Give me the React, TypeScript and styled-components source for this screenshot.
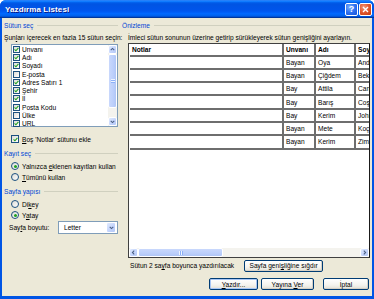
import React from "react";
import styled, { createGlobalStyle } from "styled-components";

const GlobalStyle = createGlobalStyle`
  html, body {
    margin: 0;
    padding: 0;
    background: #ffffff;
  }
  body {
    font-family: "Liberation Sans", Arial, sans-serif;
    font-size: 6.6px;
    color: #000000;
  }
`;

const Window = styled.div`
  width: 374px;
  height: 299px;
  box-sizing: border-box;
  display: flex;
  flex-direction: column;
  background: #0055e5;
  border-radius: 6px 6px 0 0;
  overflow: hidden;
`;

const TitleBar = styled.div`
  height: 18px;
  flex: none;
  display: flex;
  align-items: center;
  justify-content: space-between;
  padding: 0 2px 0 5px;
  background: linear-gradient(
    #0058ee 0%,
    #3593ff 4%,
    #288eff 6%,
    #127dff 8%,
    #036ffc 10%,
    #0262ee 14%,
    #0057e5 20%,
    #0054e3 24%,
    #0055eb 56%,
    #005bf5 66%,
    #026afe 76%,
    #0062ef 86%,
    #0052d6 92%,
    #0040ab 94%,
    #003092 100%
  );
`;

const Title = styled.span`
  color: #ffffff;
  font-weight: bold;
  font-size: 8px;
  text-shadow: 1px 1px #0a1883;
  letter-spacing: 0.1px;
`;

const Caps = styled.div`
  display: flex;
  gap: 1px;
`;

const CapButton = styled.div<{ $kind: "help" | "close" }>`
  width: 11px;
  height: 11px;
  border: 1px solid #ffffff;
  border-radius: 2px;
  display: flex;
  align-items: center;
  justify-content: center;
  color: #ffffff;
  font-weight: bold;
  font-size: 9px;
  background: ${(p) =>
    p.$kind === "close"
      ? "radial-gradient(circle at 35% 30%, #f19a7e 0%, #e35a32 45%, #c2380c 100%)"
      : "radial-gradient(circle at 35% 30%, #7fb2ff 0%, #2f72f0 50%, #1650d8 100%)"};
`;

const Body = styled.div`
  flex: 1;
  min-height: 0;
  margin: 0 2px 3px 2px;
  background: #ece9d8;
  display: flex;
  gap: 4px;
  padding: 0 2px 0 2px;
`;

const LeftCol = styled.div`
  width: 114px;
  flex: none;
  display: flex;
  flex-direction: column;
`;

const RightCol = styled.div`
  flex: 1;
  min-width: 0;
  display: flex;
  flex-direction: column;
`;

const GroupHeader = styled.div<{ $top: number }>`
  margin-top: ${(p) => p.$top}px;
  height: 8px;
  display: flex;
  align-items: center;
  gap: 4px;
  color: #0046d5;
  white-space: nowrap;
  &::after {
    content: "";
    flex: 1;
    height: 1px;
    background: #d0d0bf;
  }
`;

const Hint = styled.div<{ $indent?: number }>`
  margin-top: 4px;
  height: 9px;
  line-height: 9px;
  white-space: nowrap;
  padding-left: ${(p) => p.$indent ?? 0}px;
`;

const ListBox = styled.div`
  margin: 2px 0 0 7px;
  height: 83px;
  box-sizing: border-box;
  border: 1px solid #7f9db9;
  background: #ffffff;
  display: flex;
`;

const ListItems = styled.div`
  flex: 1;
  padding: 0 0 0 1px;
`;

const ListItem = styled.div`
  height: 8.3px;
  display: flex;
  align-items: center;
  gap: 2px;
  white-space: nowrap;
`;

const Box = styled.span<{ $size: number }>`
  width: ${(p) => p.$size}px;
  height: ${(p) => p.$size}px;
  box-sizing: border-box;
  border: 1px solid #1c5180;
  background: linear-gradient(135deg, #dcdcd7 0%, #ffffff 100%);
  display: inline-flex;
  align-items: center;
  justify-content: center;
  flex: none;
`;

const Radio = styled.span<{ $on?: boolean }>`
  width: 8px;
  height: 8px;
  box-sizing: border-box;
  border: 1px solid #1c5180;
  border-radius: 50%;
  background: linear-gradient(135deg, #dcdcd7 0%, #ffffff 100%);
  display: inline-flex;
  align-items: center;
  justify-content: center;
  flex: none;
  &::after {
    content: "";
    width: 3px;
    height: 3px;
    border-radius: 50%;
    background: ${(p) => (p.$on ? "#21a121" : "transparent")};
  }
`;

const VScroll = styled.div`
  width: 9px;
  display: flex;
  flex-direction: column;
  background: #f4f3ee;
`;

const ScrollBtn = styled.div<{ $w: number; $h: number }>`
  width: ${(p) => p.$w}px;
  height: ${(p) => p.$h}px;
  box-sizing: border-box;
  flex: none;
  border: 1px solid #ffffff;
  border-radius: 2px;
  background: linear-gradient(135deg, #e0eafe 0%, #c2d3fc 60%, #b4c8f6 100%);
  display: flex;
  align-items: center;
  justify-content: center;
`;

const Thumb = styled.div<{ $vertical?: boolean; $size: number }>`
  ${(p) => (p.$vertical ? "height" : "width")}: ${(p) => p.$size}px;
  flex: none;
  box-sizing: border-box;
  border: 1px solid #ffffff;
  border-radius: 2px;
  background: ${(p) =>
    p.$vertical
      ? "linear-gradient(90deg, #c9d8fc 0%, #bccffb 60%, #b0c6f6 100%)"
      : "linear-gradient(180deg, #c9d8fc 0%, #bccffb 60%, #b0c6f6 100%)"};
  display: flex;
  align-items: center;
  justify-content: center;
`;

const Grip = styled.span<{ $vertical?: boolean }>`
  width: 4px;
  height: 4px;
  background: ${(p) =>
    p.$vertical
      ? "repeating-linear-gradient(180deg, #eef4fe 0 1px, #8cb0f8 1px 2px)"
      : "repeating-linear-gradient(90deg, #eef4fe 0 1px, #8cb0f8 1px 2px)"};
`;

const Row = styled.div<{ $top: number; $indent?: number }>`
  margin-top: ${(p) => p.$top}px;
  padding-left: ${(p) => p.$indent ?? 7}px;
  height: 10px;
  display: flex;
  align-items: center;
  gap: 3px;
  white-space: nowrap;
`;

const SizeRow = styled.div`
  margin-top: 1px;
  padding-left: 5px;
  height: 13px;
  display: flex;
  align-items: center;
  justify-content: space-between;
  white-space: nowrap;
`;

const SelectBox = styled.div`
  width: 60px;
  height: 13px;
  box-sizing: border-box;
  border: 1px solid #7f9db9;
  background: #ffffff;
  display: flex;
  align-items: center;
  justify-content: space-between;
  padding: 1px 1px 1px 5px;
`;

const U = styled.span`
  text-decoration: underline;
`;

const Preview = styled.div`
  margin-top: 1px;
  margin-left: 6px;
  height: 215px;
  min-width: 0;
  box-sizing: border-box;
  border: 1px solid #404040;
  border-right-color: #1a1a1a;
  background: #ffffff;
  display: flex;
  flex-direction: column;
  overflow: hidden;
`;

const TableArea = styled.div`
  flex: 1;
  min-height: 0;
  overflow: hidden;
  padding-left: 1px;
`;

const Grid = styled.table`
  border-collapse: collapse;
  table-layout: fixed;
  width: 290px;
`;

const Cell = styled.td<{ $head?: boolean; $first?: boolean }>`
  height: ${(p) => (p.$head ? 10.5 : 11.3)}px;
  padding: 0 0 0 2px;
  font-weight: ${(p) => (p.$head ? "bold" : "normal")};
  border-bottom: 2px solid #6e6e6e;
  border-left: ${(p) => (p.$first ? "none" : "2px solid #6e6e6e")};
  white-space: nowrap;
  overflow: hidden;
  vertical-align: middle;
`;

const HScroll = styled.div`
  height: 9px;
  flex: none;
  display: flex;
  background: #f4f3ee;
`;

const Track = styled.div`
  flex: 1;
`;

const StatusRow = styled.div`
  margin-top: 1px;
  padding-left: 8px;
  height: 13px;
  display: flex;
  align-items: center;
  gap: 10px;
  white-space: nowrap;
`;

const XpButton = styled.div<{ $w: number; $default?: boolean; $gapBefore?: number }>`
  width: ${(p) => p.$w}px;
  height: 12px;
  margin-left: ${(p) => p.$gapBefore ?? 0}px;
  box-sizing: border-box;
  border: 1px solid #003c74;
  border-radius: 2px;
  background: linear-gradient(#ffffff 0%, #f4f3ee 60%, #e3e0d5 100%);
  box-shadow: ${(p) =>
    p.$default ? "inset 0 0 0 1px #a8c6f5" : "inset -1px -1px 0 #d6d0c5"};
  display: flex;
  align-items: center;
  justify-content: center;
  white-space: nowrap;
  flex: none;
`;

const ButtonRow = styled.div`
  margin-top: 6px;
  display: flex;
  justify-content: flex-end;
  padding-right: 1px;
  gap: 3px;
`;

const Check = () => (
  <svg width="5" height="5" viewBox="0 0 7 7">
    <path d="M0.8 3.4 L2.7 5.3 L6.2 1.3" stroke="#21a121" strokeWidth="1.6" fill="none" />
  </svg>
);

const Arrow = ({ dir }: { dir: "up" | "down" | "left" | "right" }) => {
  const d = {
    up: "M1 4.5 L3.5 2 L6 4.5",
    down: "M1 2.5 L3.5 5 L6 2.5",
    left: "M4.5 1 L2 3.5 L4.5 6",
    right: "M2.5 1 L5 3.5 L2.5 6",
  }[dir];
  return (
    <svg width="5" height="5" viewBox="0 0 7 7">
      <path d={d} stroke="#4d6185" strokeWidth="1.5" fill="none" />
    </svg>
  );
};

const columns = [
  { name: "Unvanı", on: true },
  { name: "Adı", on: true },
  { name: "Soyadı", on: true },
  { name: "E-posta", on: false },
  { name: "Adres Satırı 1", on: true },
  { name: "Şehir", on: true },
  { name: "İl", on: true },
  { name: "Posta Kodu", on: true },
  { name: "Ülke", on: false },
  { name: "URL", on: true },
];

const rows = [
  ["Bayan", "Oya", "Andaç"],
  ["Bayan", "Çiğdem", "Bektaş"],
  ["Bay", "Attila", "Cantürk"],
  ["Bay", "Barış", "Coşkun"],
  ["Bay", "Kerim", "Johnson"],
  ["Bayan", "Mete", "Koç"],
  ["Bayan", "Kerim", "Zimmer"],
];

export default function App() {
  return (
    <>
      <GlobalStyle />
      <Window>
        <TitleBar>
          <Title>Yazdırma Listesi</Title>
          <Caps>
            <CapButton $kind="help">?</CapButton>
            <CapButton $kind="close">
              <svg width="7" height="7" viewBox="0 0 7 7">
                <path d="M1 1 L6 6 M6 1 L1 6" stroke="#ffffff" strokeWidth="1.4" />
              </svg>
            </CapButton>
          </Caps>
        </TitleBar>
        <Body>
          <LeftCol>
            <GroupHeader $top={3}>Sütun seç</GroupHeader>
            <Hint>
              Şun<U>l</U>arı içerecek en fazla 15 sütun seçin:
            </Hint>
            <ListBox>
              <ListItems>
                {columns.map((c) => (
                  <ListItem key={c.name}>
                    <Box $size={7}>{c.on && <Check />}</Box>
                    {c.name}
                  </ListItem>
                ))}
              </ListItems>
              <VScroll>
                <ScrollBtn $w={9} $h={9}>
                  <Arrow dir="up" />
                </ScrollBtn>
                <Thumb $vertical $size={54}>
                  <Grip $vertical />
                </Thumb>
                <Track />
                <ScrollBtn $w={9} $h={9}>
                  <Arrow dir="down" />
                </ScrollBtn>
              </VScroll>
            </ListBox>
            <Row $top={7}>
              <Box $size={8}>
                <Check />
              </Box>
              <span>
                <U>B</U>oş 'Notlar' sütunu ekle
              </span>
            </Row>
            <GroupHeader $top={5}>Kayıt seç</GroupHeader>
            <Row $top={4}>
              <Radio $on />
              <span>
                Yalnızca <U>e</U>klenen kayıtları kullan
              </span>
            </Row>
            <Row $top={1}>
              <Radio />
              <span>
                <U>T</U>ümünü kullan
              </span>
            </Row>
            <GroupHeader $top={5}>Sayfa yapısı</GroupHeader>
            <Row $top={4}>
              <Radio />
              <span>
                Di<U>k</U>ey
              </span>
            </Row>
            <Row $top={1}>
              <Radio $on />
              <span>
                Y<U>a</U>tay
              </span>
            </Row>
            <SizeRow>
              <span>
                Say<U>f</U>a boyutu:
              </span>
              <SelectBox>
                <span>Letter</span>
                <ScrollBtn $w={10} $h={11}>
                  <Arrow dir="down" />
                </ScrollBtn>
              </SelectBox>
            </SizeRow>
          </LeftCol>
          <RightCol>
            <GroupHeader $top={3}>Önizleme</GroupHeader>
            <Hint $indent={6}>
              İmleci sütun sonunun üzerine getirip sürükleyerek sütun genişliğini ayarlayın.
            </Hint>
            <Preview>
              <TableArea>
                <Grid>
                  <colgroup>
                    <col style={{ width: 153 }} />
                    <col style={{ width: 32 }} />
                    <col style={{ width: 40 }} />
                    <col style={{ width: 65 }} />
                  </colgroup>
                  <tbody>
                    <tr>
                      <Cell $head $first>
                        Notlar
                      </Cell>
                      <Cell $head>Unvanı</Cell>
                      <Cell $head>Adı</Cell>
                      <Cell $head>Soyadı</Cell>
                    </tr>
                    {rows.map((r, i) => (
                      <tr key={i}>
                        <Cell $first />
                        <Cell>{r[0]}</Cell>
                        <Cell>{r[1]}</Cell>
                        <Cell>{r[2]}</Cell>
                      </tr>
                    ))}
                  </tbody>
                </Grid>
              </TableArea>
              <HScroll>
                <ScrollBtn $w={9} $h={9}>
                  <Arrow dir="left" />
                </ScrollBtn>
                <Thumb $size={85}>
                  <Grip />
                </Thumb>
                <Track />
                <ScrollBtn $w={9} $h={9}>
                  <Arrow dir="right" />
                </ScrollBtn>
              </HScroll>
            </Preview>
            <StatusRow>
              <span>
                Sütun 2 sa<U>y</U>fa boyunca yazdırılacak
              </span>
              <XpButton $w={79}>
                <span>
                  Sayfa geni<U>ş</U>liğine sığdır
                </span>
              </XpButton>
            </StatusRow>
            <ButtonRow>
              <XpButton $w={49} $default>
                <span>
                  <U>Y</U>azdır...
                </span>
              </XpButton>
              <XpButton $w={53}>
                <span>
                  Yayına <U>V</U>er
                </span>
              </XpButton>
              <XpButton $w={46} $gapBefore={6}>
                İptal
              </XpButton>
            </ButtonRow>
          </RightCol>
        </Body>
      </Window>
    </>
  );
}
